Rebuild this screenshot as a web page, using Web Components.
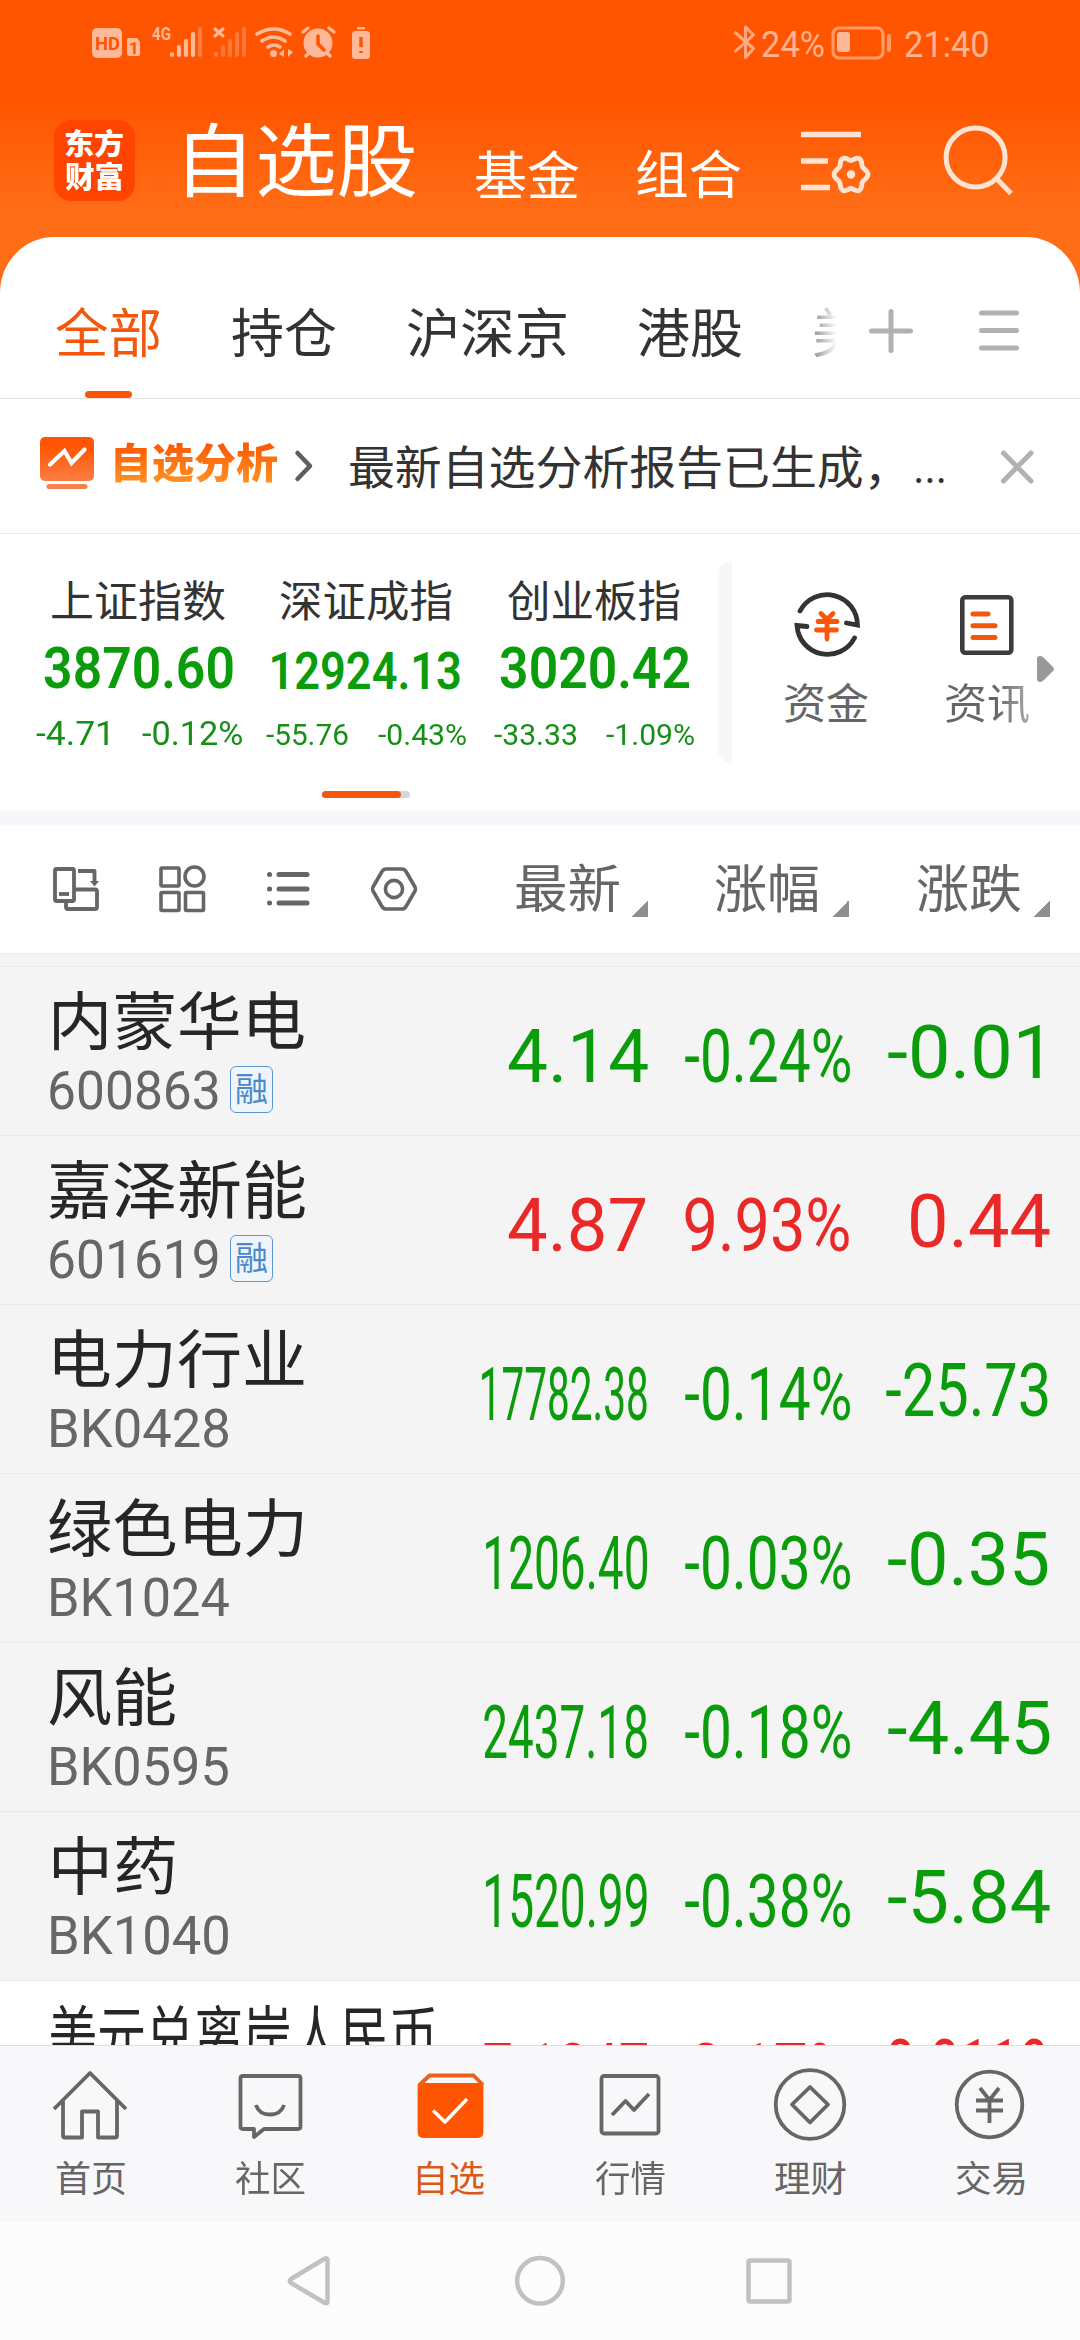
<!DOCTYPE html>
<html lang="zh-CN">
<head>
<meta charset="UTF-8">
<title>自选股</title>
<style>
    body{
        margin: 0;
        width: 1080px;
        height: 2340px;
        overflow: hidden;
        font-family: "Noto Sans CJK SC", sans-serif;
        color: #333;
    }
</style>
</head>
<body>
<watch-page></watch-page>

<script>
const NUM = 'Roboto, "Noto Sans", sans-serif';

// base: every component gives its markup and its styles
class BaseElement extends HTMLElement {
    constructor(){
        super();
        this.attachShadow({mode:'open'});
    }
    connectedCallback(){
        this.shadowRoot.innerHTML = `<style>:host{display:block;box-sizing:border-box} *{box-sizing:border-box} svg{display:block;overflow:visible;flex:none}${this.getStyles()}</style>${this.getTemplate()}`;
    }
    getStyles(){ return ''; }
    getTemplate(){ return '<slot></slot>'; }
}

// one line of text, stretched or squeezed so that its ink is "w" pixels wide
class FitText extends HTMLElement {
    constructor(){
        super();
        this.attachShadow({mode:'open'});
        this.shadowRoot.innerHTML = `
            <style>
                :host{display:block;flex:none;line-height:1;white-space:nowrap}
                span{display:inline-block;transform-origin:0 0;line-height:1;vertical-align:top}
                :host([gradient]) span{background:var(--ink);-webkit-background-clip:text;background-clip:text;color:transparent;padding-bottom:4px}
            </style>
            <span><slot></slot></span>`;
    }
    connectedCallback(){
        const w = Number(this.getAttribute('w'));
        const cs = getComputedStyle(this);
        const ctx = document.createElement('canvas').getContext('2d');
        ctx.font = `${cs.fontWeight} ${cs.fontSize} ${cs.fontFamily}`;
        const m = ctx.measureText(this.textContent.trim());
        const scale = w / (m.actualBoundingBoxLeft + m.actualBoundingBoxRight);
        this.style.width = w + 'px';
        this.style.height = cs.fontSize;
        this.shadowRoot.querySelector('span').style.transform =
            `translateX(${m.actualBoundingBoxLeft * scale}px) scaleX(${scale})`;
    }
}

class StatusBar extends BaseElement {
    getStyles(){
        return `
            :host{height:100px;display:flex;padding:0 92px 0 90px;color:#ffb38f;justify-content:space-between;font-family:${NUM}}
            .left{margin-top:20px}
            .right{display:flex;padding-top:20px}
            fit-text{font-size:37px;margin-top:6px}
        `;
    }
    getTemplate(){
        return `
            <svg class="left" width="285" height="45" viewBox="90 20 285 45" fill="#ffb999">
                <rect x="92" y="28" width="30" height="30" rx="5"/>
                <text x="95" y="50" font-size="19" font-weight="700" fill="#ff5500" textLength="25" lengthAdjust="spacingAndGlyphs">HD</text>
                <path d="M129 38h8l3 4v12q0 2-2 2h-9q-2 0-2-2V40q0-2 2-2z"/>
                <text x="129" y="54" font-size="17" font-weight="700" fill="#ff5500">1</text>
                <text x="152" y="40" font-size="18" font-weight="700" textLength="19" lengthAdjust="spacingAndGlyphs">4G</text>
                <g stroke="#ffb999" stroke-width="4.2" stroke-linecap="round">
                    <path d="M172 54v1M179 47v8M186 41v14M193 34v21"/>
                    <path d="M200 29v26" stroke="#ff7e42"/>
                    <path d="M216 54v1M223 47v8M230 41v14M237 34v21M244 29v26" stroke="#ff7838"/>
                    <path d="M215 29l8 7M223 29l-8 7" stroke-width="3.2"/>
                </g>
                <g fill="none" stroke="#ffb999" stroke-width="3.6" stroke-linecap="round">
                    <path d="M257 34q17-10 33 0M262 41q12-8 23 0M268 47q6-4 12 0"/>
                </g>
                <circle cx="273.500" cy="53.500" r="3.500"/>
                <path d="M279 54l5-5v8M288 49v8l5-5z"/>
                <circle cx="318" cy="43" r="14.500"/>
                <path d="M303 32l5-4M334 32l-5-4M306 56l4-4M330 56l-4-4" stroke="#ffb999" stroke-width="3.500" stroke-linecap="round"/>
                <path d="M318 36v8l6 6" fill="none" stroke="#ff5500" stroke-width="3.500" stroke-linecap="round"/>
                <rect x="357" y="27" width="8" height="2.500"/>
                <rect x="352" y="31" width="18" height="28" rx="3.500"/>
                <path d="M361 37v10M361 51v2" stroke="#ff5500" stroke-width="3.500"/>
            </svg>
            <div class="right">
                <svg width="28" height="45" viewBox="732 20 28 45" fill="none" stroke="#ffa87d" stroke-width="3" stroke-linejoin="round">
                    <path d="M733.500 32l19 16.500-8 9V27l8 8-19 17"/>
                </svg>
                <fit-text w="62" style="margin-left:1px">24%</fit-text>
                <svg width="62" height="45" viewBox="830 20 62 45" style="margin-left:7px">
                    <rect x="832" y="28" width="50" height="30" rx="6" fill="none" stroke="#ff9a69" stroke-width="3.200"/>
                    <rect x="836" y="32" width="13" height="20" rx="3" fill="#ffb999"/>
                    <path d="M888 36v14" stroke="#ff9a69" stroke-width="4" stroke-linecap="round"/>
                </svg>
                <fit-text w="83" style="margin-left:12px">21:40</fit-text>
            </div>
        `;
    }
}

class AppHeader extends BaseElement {
    getStyles(){
        return `
            :host{height:137px;display:flex;align-items:flex-start;padding-left:54px;color:#fff}
            .logo{width:81px;height:81px;margin-top:20px;border-radius:17px;background:#ff4400;padding:8px 0 0 11px;font-weight:900}
            .logo fit-text{font-size:29px;margin-bottom:4px}
            .title{font-size:80px;margin:15px 0 0 52px}
            .link{font-size:52px;margin-top:47px}
        `;
    }
    getTemplate(){
        return `
            <div class="logo"><fit-text w="58">东方</fit-text><fit-text w="58">财富</fit-text></div>
            <fit-text class="title" w="229">自选股</fit-text>
            <fit-text class="link" w="104" style="margin-left:59px">基金</fit-text>
            <fit-text class="link" w="104" style="margin-left:58px;margin-top:46px">组合</fit-text>
            <svg width="70" height="70" viewBox="800 128 70 70" style="margin:28px 0 0 59px" fill="none" stroke="#ffe3d2" stroke-width="5.400">
                <path d="M801 134.500h60M801 161h27M801 187.500h29"/>
                <path stroke-linejoin="round" stroke-width="4.800" d="M851 160.500C853.500 160.500 856 157 859 158.500C863 160.500 861 164.500 862.500 167C864 169.500 868 170.500 868 174.500C868 178.500 864 179.500 862.500 182C861 184.500 863 188.500 859 190.500C856 192 853.500 188.500 851 188.500C848.500 188.500 846 192 843 190.500C839 188.500 841 184.500 839.500 182C838 179.500 834 178.500 834 174.500C834 170.500 838 169.500 839.500 167C841 164.500 839 160.500 843 158.500C846 157 848.500 160.500 851 160.500Z"/>
                <circle cx="851" cy="174.500" r="4.200" fill="#ffe3d2" stroke="none"/>
            </svg>
            <svg width="72" height="72" viewBox="942 124 72 72" style="margin:24px 0 0 72px" fill="none" stroke="#ffe3d2" stroke-width="5">
                <circle cx="975.600" cy="157.500" r="29.500"/>
                <path d="M996 178l15 15.500"/>
            </svg>
        `;
    }
}

class TabBar extends BaseElement {
    getStyles(){
        return `
            :host{height:162px;display:flex;align-items:flex-start;padding-left:56px;background:#fff;border-radius:54px 54px 0 0/56px 56px 0 0;border-bottom:1px solid #e1e1e1}
            .tab{font-size:53px}
            .item{margin-top:67px;height:94px}
            .active{color:#f3570c}
            .active i{display:block;width:47px;height:7px;border-radius:4px;background:#fb5607;margin:34px 0 0 29px}
            .fade{width:22px;height:70px;margin-left:72px;overflow:hidden}
            .fade fit-text{-webkit-mask-image:linear-gradient(90deg,rgba(0,0,0,.5),transparent 23px);mask-image:linear-gradient(90deg,rgba(0,0,0,.5),transparent 23px)}
        `;
    }
    getTemplate(){
        return `
            <div class="item active"><fit-text class="tab" w="104">全部</fit-text><i></i></div>
            <div class="item" style="margin-left:72px"><fit-text class="tab" w="104">持仓</fit-text></div>
            <div class="item" style="margin-left:72px"><fit-text class="tab" w="158">沪深京</fit-text></div>
            <div class="item" style="margin-left:72px"><fit-text class="tab" w="104">港股</fit-text></div>
            <div class="item fade"><fit-text class="tab" w="49">美</fit-text></div>
            <svg width="44" height="44" viewBox="869 309 44 44" style="margin:72px 0 0 33px" stroke="#b1b1b1" stroke-width="5" stroke-linecap="round">
                <path d="M871.500 331h39M891 311.500v39"/>
            </svg>
            <svg width="42" height="44" viewBox="979 309 42 44" style="margin:72px 0 0 66px" stroke="#b1b1b1" stroke-width="5" stroke-linecap="round">
                <path d="M981.500 313h35M981.500 330.500h35M981.500 348h35"/>
            </svg>
        `;
    }
}

class NoticeBar extends BaseElement {
    getStyles(){
        return `
            :host{height:135px;display:flex;align-items:flex-start;padding:38px 0 0 40px;background:#fff;border-bottom:1px solid #ebebeb}
            .title{font-size:41px;font-weight:900;margin:3px 0 0 21px;--ink:linear-gradient(#fb5a05 10%,#ff9524 100%)}
            .msg{font-size:46px;margin:4px 0 0 37px}
            .dots{font-family:${NUM};font-size:46px;margin:7px 0 0 36px}
        `;
    }
    getTemplate(){
        return `
            <svg width="54" height="53" viewBox="40 437 54 53">
                <defs><linearGradient id="g" x1="0" y1="0" x2="0" y2="1"><stop offset=".2" stop-color="#ff5500"/><stop offset="1" stop-color="#fb7d44"/></linearGradient></defs>
                <rect x="40" y="437" width="54" height="44" rx="5" fill="url(#g)"/>
                <rect x="46.500" y="484" width="41" height="5" rx="2.500" fill="#f5824f"/>
                <path d="M50 464.500l14.500-13.500 7 12 13-13.500" fill="none" stroke="#fff" stroke-width="4.200" stroke-linecap="round"/>
            </svg>
            <fit-text class="title" gradient w="163">自选分析</fit-text>
            <svg width="18" height="34" viewBox="295 449 18 34" style="margin:12px 0 0 17px" fill="none" stroke="#5e5e5e" stroke-width="4.500" stroke-linecap="round" stroke-linejoin="round">
                <path d="M297.500 453l12.500 13-12.500 13"/>
            </svg>
            <fit-text class="msg" w="530">最新自选分析报告已生成，</fit-text>
            <fit-text class="dots" w="28">...</fit-text>
            <svg width="34" height="34" viewBox="1000 450 34 34" style="margin:13px 0 0 57px" stroke="#b1b1b1" stroke-width="5" stroke-linecap="round">
                <path d="M1002.500 453l27.500 28M1030 453l-27.500 28"/>
            </svg>
        `;
    }
}

class IndexCard extends BaseElement {
    getStyles(){
        return `
            :host{width:228px;padding-top:43px;text-align:center;color:#0a9c0a}
            .name{font-size:43px;color:#333;margin:0 auto}
            .value{height:60px;display:flex;align-items:flex-end;justify-content:center;margin-top:17px;font-family:${NUM};font-weight:600}
            .change{height:40px;display:flex;align-items:flex-end;justify-content:center;gap:${this.getAttribute('gap')}px;margin-top:13px;font-family:${NUM};color:#168f16}
        `;
    }
    getTemplate(){
        const [name, value, diff, pct] = ['name','value','diff','pct'].map(a => this.getAttribute(a).split('|'));
        const [big, small] = this.getAttribute('sizes').split(' ');
        return `
            <fit-text class="name" w="${name[1]}">${name[0]}</fit-text>
            <div class="value"><fit-text w="${value[1]}" style="font-size:${big}px">${value[0]}</fit-text></div>
            <div class="change" style="font-size:${small}px">
                <fit-text w="${diff[1]}">${diff[0]}</fit-text>
                <fit-text w="${pct[1]}">${pct[0]}</fit-text>
            </div>
        `;
    }
}

class IndexPanel extends BaseElement {
    getStyles(){
        return `
            :host{height:291px;background:linear-gradient(#fff 0 277px,#f6f7fa 277px);display:grid;grid-template-columns:718px 14px 1fr}
            .cards{display:flex;padding-left:24px;height:240px}
            .bar{width:88px;height:7px;border-radius:4px;background:#d4d7de;margin:17px 0 0 322px}
            .bar i{display:block;width:79px;height:7px;border-radius:4px;background:#f3570c}
            .split{height:202px;margin-top:27px;background:#f7f7fa;border-radius:14px 0 0 14px}
            .shortcuts{display:flex;padding-left:53px;color:#666}
            .shortcuts fit-text{font-size:42px}
        `;
    }
    getTemplate(){
        return `
            <div>
                <div class="cards">
                    <index-card name="上证指数|173" value="3870.60|189" diff="-4.71|72" pct="-0.12%|100" gap="33" sizes="58 33"></index-card>
                    <index-card name="深证成指|172" value="12924.13|188" diff="-55.76|82" pct="-0.43%|88" gap="30" sizes="51 30"></index-card>
                    <index-card name="创业板指|172" value="3020.42|189" diff="-33.33|82" pct="-1.09%|88" gap="30" sizes="58 30"></index-card>
                </div>
                <div class="bar"><i></i></div>
            </div>
            <div class="split"></div>
            <div class="shortcuts">
                <div>
                    <svg width="84" height="70" viewBox="784 590 84 70" style="margin-top:56px" fill="none" stroke="#333" stroke-width="4.800" stroke-linecap="round">
                        <path d="M799 611A30.500 30.500 0 0 1 856.500 625L845.500 623"/>
                        <path d="M853.500 638A30.500 30.500 0 0 1 796 625.500L806 626.500"/>
                        <path d="M820 613.500l6 6 6-6M817 621.500h19M815.500 630h20M826 620v19" stroke="#fb5607"/>
                    </svg>
                    <fit-text w="83" style="margin-top:20px">资金</fit-text>
                </div>
                <div style="margin-left:77px">
                    <svg width="54" height="60" viewBox="959 595 54 60" style="margin:61px 0 0 14px" fill="none" stroke="#3c3c3c" stroke-width="4.600" stroke-linecap="round">
                        <rect x="961.300" y="597.300" width="49" height="55.500" rx="3"/>
                        <path d="M972 614h15M972 625.700h22M972 637.500h22" stroke="#f3570c" stroke-width="5"/>
                    </svg>
                    <fit-text gradient w="83" style="margin-top:25px;--ink:linear-gradient(90deg,#666 60%,#aaa)">资讯</fit-text>
                </div>
                <svg width="18" height="27" viewBox="1036 656 18 27" style="margin:122px 0 0 8px">
                    <path d="M1036 659q0-3 3-3 2 0 4 2l9 9q2 2 0 4l-9 9q-2 2-4 2-3 0-3-3z" fill="#999"/>
                </svg>
            </div>
        `;
    }
}

class ListToolbar extends BaseElement {
    getStyles(){
        return `
            :host{height:129px;display:flex;align-items:flex-start;padding-left:52px;background:#fff;border-bottom:1px solid #e9e9e9;color:#666}
            .icon{margin-top:39px}
            fit-text{font-size:52px;margin-top:35px}
            .sort{margin:75px 0 0 12px;width:17px;height:17px;background:linear-gradient(135deg,transparent 50%,#8e8e93 50%)}
        `;
    }
    getTemplate(){
        return `
            <svg class="icon" width="48" height="50" viewBox="52 864 48 50" fill="none" stroke="#666" stroke-width="3.800" stroke-linejoin="round">
                <rect x="55" y="869" width="19" height="32" rx="1.500"/>
                <path d="M59 894h10"/>
                <path d="M75 889.500h20q2 0 2 2v15.500q0 2-2 2H68q-2 0-2-2v-5"/>
                <path d="M78 871h16.500v10"/><path d="M90 881h9l-4.500 5.500z" fill="#666" stroke="none"/>
            </svg>
            <svg class="icon" style="margin-left:59px" width="46" height="50" viewBox="159 864 46 50" fill="none" stroke="#666" stroke-width="3.600">
                <rect x="161" y="868" width="18" height="18" rx="1"/><circle cx="194.500" cy="876.500" r="9.500"/>
                <rect x="161" y="892.500" width="18" height="18" rx="1"/><rect x="185.500" y="892.500" width="18" height="18" rx="1"/>
            </svg>
            <svg class="icon" style="margin-left:61px" width="44" height="50" viewBox="266 864 44 50" stroke="#666" stroke-width="5" stroke-linecap="round">
                <path d="M279 874.500h28M279 889h28M279 903h28M269.500 874.500h.1M269.500 889h.1M269.500 903h.1"/>
            </svg>
            <svg class="icon" style="margin-left:60px" width="48" height="50" viewBox="370 864 48 50" fill="none" stroke="#666" stroke-width="3.600" stroke-linejoin="round">
                <path d="M386 869h16q2.500 0 4 2.500l9 15.500q1 2 0 4l-9 15.500q-1.500 2.500-4 2.500h-16q-2.500 0-4-2.500L373 891q-1-2 0-4l9-15.500q1.500-2.500 4-2.500z"/>
                <circle cx="394" cy="889" r="8.600"/>
            </svg>
            <fit-text w="103" style="margin-left:98px">最新</fit-text><div class="sort"></div>
            <fit-text w="103" style="margin-left:67px">涨幅</fit-text><div class="sort" style="margin-left:14px"></div>
            <fit-text w="104" style="margin-left:68px">涨跌</fit-text><div class="sort"></div>
        `;
    }
}

class StockRow extends BaseElement {
    getStyles(){
        return `
            :host{height:169px;flex:none;display:grid;grid-template-columns:448px 200px 202px 200px;background:#f4f4f4;border-bottom:1px solid #ebebeb;color:${this.getAttribute('trend') === 'up' ? '#e92828' : '#0a9c0a'}}
            :host([plain]){background:#fff}
            .name{font-size:63px;color:#262626;margin-top:18px}
            .code{display:flex;font-family:${NUM};font-size:53px;color:#666;margin-top:17px}
            .num{font-family:${NUM};font-size:75px;display:flex;justify-content:flex-end;padding-top:52px}
            .num.last{padding-top:48px}
            .badge{width:43px;height:47px;margin:1px 0 0 12px;border:1.500px solid #5b96d3;border-radius:6px;background:#eff5fb;color:#4a89cb;font-family:"Noto Sans CJK SC",sans-serif;font-size:33px;padding:4px 0 0 5px}
        `;
    }
    // attributes hold text|left edge|right edge
    cell(attr, end, cls){
        const [text, x1, x2] = this.getAttribute(attr).split('|');
        return `<div class="num ${cls}"><fit-text w="${x2 - x1}" style="margin-right:${end - x2}px">${text}</fit-text></div>`;
    }
    getTemplate(){
        const [name, nx1, nx2] = this.getAttribute('name').split('|');
        const [code, cx1, cx2] = this.getAttribute('code').split('|');
        const badge = this.hasAttribute('margin') ? '<div class="badge"><fit-text w="31">融</fit-text></div>' : '';
        return `
            <div>
                <fit-text class="name" w="${nx2 - nx1}" style="margin-left:${nx1}px">${name}</fit-text>
                ${code ? `<div class="code"><fit-text w="${cx2 - cx1}" style="margin-left:${cx1}px">${code}</fit-text>${badge}</div>` : ''}
            </div>
            ${this.cell('latest', 648, '')}
            ${this.cell('pct', 850, '')}
            ${this.cell('diff', 1050, 'last')}
        `;
    }
}

class StockList extends BaseElement {
    getStyles(){
        return `
            :host{height:1091px;overflow:hidden;display:flex;flex-direction:column;background:#fff}
            .gap{flex:none;height:13px;background:#f4f4f4;border-bottom:1px solid #ebebeb}
        `;
    }
    getTemplate(){
        return `
            <div class="gap"></div>
            <stock-row name="内蒙华电|54|304" code="600863|50|218" margin latest="4.14|508|648" pct="-0.24%|685|850" diff="-0.01|888|1040"></stock-row>
            <stock-row trend="up" name="嘉泽新能|49|305" code="601619|50|218" margin latest="4.87|508|645" pct="9.93%|685|849" diff="0.44|911|1050"></stock-row>
            <stock-row name="电力行业|54|304" code="BK0428|51|228" latest="17782.38|482|647" pct="-0.14%|685|850" diff="-25.73|886|1048"></stock-row>
            <stock-row name="绿色电力|49|303" code="BK1024|51|229" latest="1206.40|486|647" pct="-0.03%|685|850" diff="-0.35|888|1048"></stock-row>
            <stock-row name="风能|49|175" code="BK0595|51|228" latest="2437.18|484|647" pct="-0.18%|685|850" diff="-4.45|888|1050"></stock-row>
            <stock-row name="中药|54|175" code="BK1040|51|228" latest="1520.99|486|647" pct="-0.38%|685|850" diff="-5.84|888|1050"></stock-row>
            <stock-row plain trend="up" name="美元兑离岸人民币|50|434" code="" latest="7.1247|484|647" pct="0.17%|692|850" diff="0.0119|888|1047"></stock-row>
        `;
    }
}

class NavItem extends BaseElement {
    getStyles(){
        return `
            :host{width:180px;display:flex;flex-direction:column;align-items:center;color:#666;font-size:36px}
            :host([active]){color:#d95a17}
            ::slotted(svg){display:block;margin:18px 0 0;overflow:visible}
            fit-text{margin-top:14px}
        `;
    }
    getTemplate(){
        return `<slot></slot><fit-text w="${this.getAttribute('w')}">${this.getAttribute('label')}</fit-text>`;
    }
}

class NavBar extends BaseElement {
    getStyles(){
        return `
            :host{height:177px;display:flex;background:#f8f8fb;border-top:1px solid #dedee2}
            svg{fill:none;stroke:#666;stroke-width:3.800;stroke-linejoin:round}
        `;
    }
    getTemplate(){
        return `
            <nav-item label="首页" w="69">
                <svg width="80" height="80" viewBox="50 2064 80 80"><path d="M54 2109l36-36 36 36M63 2101v34.500q0 2 2 2h17v-26h16v26h17q2 0 2-2V2101"/></svg>
            </nav-item>
            <nav-item label="社区" w="70">
                <svg width="80" height="80" viewBox="230 2064 80 80"><path d="M243 2076h55q2.500 0 2.500 2.500v48q0 2.500-2.500 2.500h-34l-10 8v-8h-11q-2.500 0-2.500-2.500v-48q0-2.500 2.500-2.500zM256 2105q3 9.500 14 9.500t14-9.500"/></svg>
            </nav-item>
            <nav-item active label="自选" w="67">
                <svg width="80" height="80" viewBox="410 2064 80 80"><path d="M419.500 2085v47q0 4 4 4h54q4 0 4-4v-47z" fill="#ff5500" stroke="#ff5500"/><path d="M419.500 2085l10-9.500h44l9.500 9.500" stroke="#ef5f1c"/><path d="M433 2110.500l12 11.500 22-23" stroke="#fff" stroke-width="3.500"/></svg>
            </nav-item>
            <nav-item label="行情" w="70">
                <svg width="80" height="80" viewBox="590 2064 80 80"><rect x="601.500" y="2076" width="57" height="57.500" rx="2.500"/><path d="M612 2115l13.500-14 8.500 9 15-16"/></svg>
            </nav-item>
            <nav-item label="理财" w="71">
                <svg width="80" height="80" viewBox="770 2064 80 80"><circle cx="810" cy="2104.500" r="34.300"/><path d="M810 2087l18 17.500-18 18-18-18z"/></svg>
            </nav-item>
            <nav-item label="交易" w="69">
                <svg width="80" height="80" viewBox="950 2064 80 80"><circle cx="989.500" cy="2104.500" r="32.800"/><path d="M980 2088l9.500 12 9.500-12M976 2100.500h27M976 2110.500h27M989.500 2100v23"/></svg>
            </nav-item>
        `;
    }
}

class SystemNav extends BaseElement {
    getStyles(){
        return `
            :host{height:118px;display:flex;background:#fcfcfc;padding:32px 0 0 284px}
            svg{fill:none;stroke:#c1c1c1;stroke-width:4.500;stroke-linejoin:round}
        `;
    }
    getTemplate(){
        return `
            <svg width="50" height="54" viewBox="284 2254 50 54"><path d="M325 2258.500q2.500-1 2.500 1.500v41.500q0 2.500-2.500 1.500l-34-20q-2.500-2 0-4z"/></svg>
            <svg width="50" height="54" viewBox="515 2254 50 54" style="margin-left:181px"><circle cx="540" cy="2280.700" r="22.800"/></svg>
            <svg width="50" height="54" viewBox="744 2254 50 54" style="margin-left:179px"><rect x="748.500" y="2260.500" width="41" height="41" rx="1.500"/></svg>
        `;
    }
}

class WatchPage extends BaseElement {
    getStyles(){
        return `
            :host{width:1080px;height:2340px;background:linear-gradient(#ff5500 0 100px,#ff6e17 215px,#ff6e17 300px,#fff 300px)}
        `;
    }
    getTemplate(){
        return `
            <status-bar></status-bar>
            <app-header></app-header>
            <tab-bar></tab-bar>
            <notice-bar></notice-bar>
            <index-panel></index-panel>
            <list-toolbar></list-toolbar>
            <stock-list></stock-list>
            <nav-bar></nav-bar>
            <system-nav></system-nav>
        `;
    }
}

customElements.define('watch-page', WatchPage);
customElements.define('status-bar', StatusBar);
customElements.define('app-header', AppHeader);
customElements.define('tab-bar', TabBar);
customElements.define('notice-bar', NoticeBar);
customElements.define('index-panel', IndexPanel);
customElements.define('index-card', IndexCard);
customElements.define('list-toolbar', ListToolbar);
customElements.define('stock-list', StockList);
customElements.define('stock-row', StockRow);
customElements.define('nav-bar', NavBar);
customElements.define('nav-item', NavItem);
customElements.define('system-nav', SystemNav);
// last, so that the fonts of its hosts are already set when it measures
customElements.define('fit-text', FitText);
</script>
</body>
</html>
